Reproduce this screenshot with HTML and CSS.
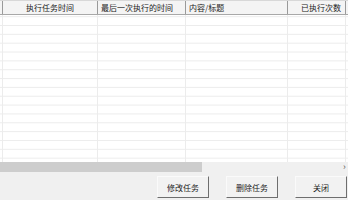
FILE: index.html
```
<!DOCTYPE html>
<html lang="zh-CN">
<head>
  <meta charset="UTF-8">
  <title>任务列表</title>
  <link rel="stylesheet" href="styles.css">
</head>
<body>
<div class="list">
  <div class="list-head">
    <div class="col col-0"></div>
    <div class="col col-1 center">执行任务时间</div>
    <div class="col col-2">最后一次执行的时间</div>
    <div class="col col-3">内容/标题</div>
    <div class="col col-4 right">已执行次数</div>
    <div class="col col-5"></div>
  </div>
  <div class="list-body"></div>
  <div class="hscroll">
    <div class="thumb"></div>
    <div class="arrow">&rsaquo;</div>
  </div>
</div>
<div class="actions">
  <button class="btn">修改任务</button>
  <button class="btn">删除任务</button>
  <button class="btn">关闭</button>
</div>
</body>
</html>
```

FILE: styles.css
```
body {
  margin: 0;
  width: 348px;
  height: 200px;
  overflow: hidden;
  background: #f0f0f0;
  font-family: "Noto Sans CJK SC", "DejaVu Sans", sans-serif;
  font-size: 8px;
  color: #222;
}

.list {
  background: #fff;
}

.list-head {
  display: flex;
  height: 13px;
  border-top: 1px solid #d8d8d8;
  border-bottom: 1px solid #a8a8a8;
  background: #f4f4f4;
  line-height: 13px;
  white-space: nowrap;
}

.col {
  flex: none;
  overflow: hidden;
  border-right: 1px solid #9a9a9a;
  padding: 0 3px;
  box-sizing: border-box;
}
.col-0 { width: 3px; padding: 0; }
.col-1 { width: 95px; }
.col-2 { width: 88px; }
.col-3 { width: 102px; }
.col-4 { width: 58px; padding-right: 4px; }
.col-5 { flex: 1; border-right: none; }

.center { text-align: center; }
.right { text-align: right; }

/* empty list still shows its grid */
.list-body {
  height: 147px;
  background:
    linear-gradient(90deg,
      transparent 2px, #ececec 2px, #ececec 3px,
      transparent 3px, transparent 97px, #ececec 97px, #ececec 98px,
      transparent 98px, transparent 185px, #ececec 185px, #ececec 186px,
      transparent 186px, transparent 287px, #ececec 287px, #ececec 288px,
      transparent 288px, transparent 345px, #ececec 345px, #ececec 346px,
      transparent 346px),
    linear-gradient(180deg, #ececec 0, #ececec 1px, transparent 1px);
  background-size: 100% 100%, 100% 8.85px;
  background-position: 0 0, 0 10px;
}

.hscroll {
  display: flex;
  height: 10px;
  background: #f0f0f0;
}
.thumb {
  width: 202px;
  background: #cdcdcd;
}
.arrow {
  margin-left: auto;
  width: 5px;
  font-size: 9px;
  line-height: 9px;
  color: #555;
}

.actions {
  display: flex;
  gap: 17px;
  padding: 4px 0 0 157px;
}

.btn {
  width: 52px;
  height: 22px;
  padding: 0;
  flex: none;
  font-family: inherit;
  font-size: 8px;
  color: #222;
  background: #f2f2f2;
  border: 1px solid;
  border-color: #fafafa #6e6e6e #6e6e6e #fafafa;
}
```
